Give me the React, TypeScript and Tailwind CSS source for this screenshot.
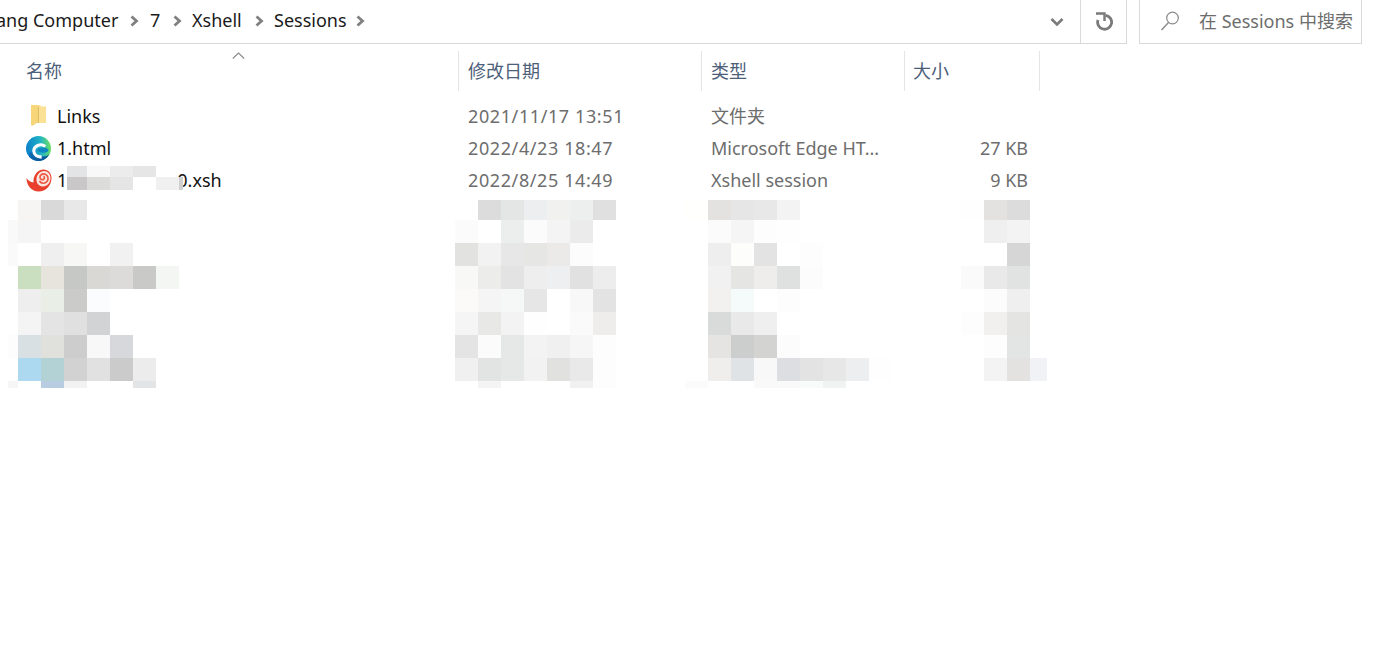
import React from "react";

type Tile = string | null;

const UI_FONT = "font-['Noto_Sans','Noto_Sans_CJK_SC',sans-serif]";

const nameTiles: Tile[] = [
  null, "#f6f5f3", "#d9d9d9", "#e8e8e8", null, null, null, null,
  "#f9f9f9", "#f5f5f5", null, null, null, null, null, null,
  "#fafafa", null, "#efefef", "#f7f7f5", null, "#f1f1f1", null, null,
  null, "#c9dfc0", "#e6e4dc", "#c6c8c6", "#d9d8d5", "#dcdbd9", "#c9c9c8", "#f4f6f4",
  null, "#eeeeee", "#e9efe7", "#cbcbc9", "#fbfcfe", null, null, null,
  null, "#f4f4f4", "#e4e4e4", "#e0e0e0", "#d2d3d5", null, null, null,
  "#fdfdfd", "#d9e0e3", "#e0e0dd", "#cdcdcd", "#f8f8f8", "#d7d8dc", null, null,
  null, "#acd8f0", "#b2d2d6", "#d2d2d2", "#e1e1e1", "#cbcbcb", "#ececec", null,
  "#f6f6f6", null, "#b9cde2", "#f2f2f2", null, null, "#e3e4e6", null,
];

const dateTiles: Tile[] = [
  null, "#dcdcdc", "#e4e6e5", "#eceef0", "#f1f1ef", "#ecefee", "#e0e0e0",
  "#fbfbfb", null, "#ebeeec", "#fbfbfb", "#f4f4f4", "#ebebeb", null,
  "#e2e2e0", "#f2f2f2", "#e7e7e7", "#e6e6e5", "#ebeae8", "#fcfcfc", null,
  "#f8f8f6", "#ececea", "#e3e3e3", "#eeeeee", "#eeeff1", "#e1e1e1", "#ededed",
  "#fbfaf8", "#f5f5f5", "#f6f8f7", "#e6e6e6", null, "#f8f8f8", "#e3e3e3",
  "#f5f5f5", "#e8e8e6", "#f3f3f3", "#fefefe", null, "#fafafa", "#eeedeb",
  "#e4e4e4", "#fbfbfb", "#e6e8e7", "#f3f3f3", "#f0f0f0", "#f6f6f6", "#fdfdfd",
  "#f0f0f0", "#e1e4e3", "#e6e8e7", "#f2f2f2", "#e1e1df", "#e9e9e9", "#fdfdfd",
  null, "#f4f4f4", null, null, null, "#f1f1f1", "#fdfdfd",
];

const typeTiles: Tile[] = [
  "#fffffd", "#e3e2e0", "#e6e6e6", "#e8e8e8", "#f3f3f3", null, null, null, null,
  null, "#fbfbfb", "#f5f5f5", "#fdfdfd", "#fefefe", null, null, null, null,
  null, "#eeeeee", "#fdfdfb", "#e3e3e3", null, "#fdfdfd", null, null, null,
  null, "#f1f1f1", "#e5e5e3", "#eeedeb", "#dfe1e0", "#fcfcfc", null, null, null,
  null, "#f2f1ef", "#f5fafb", null, "#fdfdfd", null, null, null, null,
  null, "#d9dbda", "#e9e9e9", "#efefef", null, null, null, null, null,
  null, "#e5e4e2", "#cccecd", "#d3d3d1", "#fcfcfc", null, null, null, null,
  null, "#efeeec", "#e0e3e6", "#f8f8f8", "#dcdee1", "#e3e3e3", "#e7e7e7", "#edeef0", "#fefefe",
  "#fbfbfb", null, null, "#f9f9f9", "#f9f9f9", "#f9fafa", "#f1f3f3", null, null,
];

const sizeTiles: Tile[] = [
  "#fefefe", "#e3e2e0", "#dcdcdc", null,
  null, "#efefef", "#f3f3f3", null,
  null, null, "#d6d6d6", null,
  "#fafafa", "#e9e9e9", "#e1e3e3", null,
  null, "#fcfcfc", "#efefef", null,
  "#fdfdfd", "#f1f0ee", "#e4e4e2", null,
  null, "#fdfdfd", "#e3e5e5", null,
  null, "#f3f3f3", "#e3e2e0", "#f1f2f5",
  null, null, null, null,
];

const Tiles = ({ tiles }: { tiles: Tile[] }) => (
  <>
    {tiles.map((color, i) => (
      <div key={i} style={color ? { backgroundColor: color } : undefined} />
    ))}
  </>
);

const Chevron = () => (
  <svg width="10" height="12" viewBox="0 0 10 12" className="mt-[2px] shrink-0">
    <path d="M2.500 1.500 7.500 6l-5 4.500" fill="none" stroke="#808080" strokeWidth="2.800" />
  </svg>
);

const FolderIcon = () => (
  <svg width="17" height="22" viewBox="0 0 17 22">
    <path d="M1 0h9l1.500 1.500H16V18H2z" fill="#fbe196" />
    <path d="M7.500 1.500H9V18H7.500z" fill="#e6bf62" />
    <path d="M1 0h6.500v17.500L2 21l-1-1z" fill="#f6d678" />
  </svg>
);

const EdgeIcon = () => (
  <svg width="25" height="25" viewBox="0 0 24 24">
    <defs>
      <linearGradient id="edgeTop" x1="0" y1="0.5" x2="1" y2="0.4">
        <stop offset="0" stopColor="#0b7fcb" />
        <stop offset="0.6" stopColor="#22b4c4" />
        <stop offset="1" stopColor="#6ee05c" />
      </linearGradient>
      <linearGradient id="edgeBottom" x1="0" y1="0" x2="1" y2="1">
        <stop offset="0" stopColor="#0d76c0" />
        <stop offset="1" stopColor="#0b4d8f" />
      </linearGradient>
    </defs>
    <circle cx="12" cy="12" r="12" fill="url(#edgeTop)" />
    <path d="M3 20c3 3.500 7 4.300 10 4 4-.4 7.500-3 9.500-6.500-3 2.300-7 2.700-10 1.200-2-1-3.500-3-3.500-5L3 16z" fill="url(#edgeBottom)" />
    <path d="M18.500 10C14 6.500 7.500 9.500 7.500 14.500c0 3.500 3.500 6 7.500 5.500" fill="none" stroke="#ffffff" strokeWidth="3" />
    <path d="M11 13.500c1.500-2.500 6.500-3.500 10.500-.5.500 2-2 3-4.500 3-2.500 0-5-.5-6-2.500z" fill="#0f86c4" />
  </svg>
);

const ShellIcon = () => (
  <svg width="26" height="24" viewBox="0 0 26 24">
    <path d="M.5 10c1.500 2.500 4 4 7 4.500-.5-6 3-12.500 9.500-13 5-.4 8.500 3.500 8.500 8.500 0 7.500-5.500 13.500-13 13.500C6 23.500.5 18 .5 10z" fill="#e8402c" />
    <path d="M10.500 12.500C10 7 14 3 18 3c3.800 0 6.500 3 6.500 7 0 4.500-3.300 8.500-7.500 8.500-3.300 0-6.200-2.500-6.500-6z" fill="#fbe7e0" />
    <path d="M13.500 13c1.500 2.800 5.500 3 7.500.5 1.800-2.300 1.300-6-1.800-7.300-2.800-1.100-5.500.8-5.200 3.300.2 1.900 2.400 2.900 3.800 1.600 1-.9.800-2.400-.4-2.800" fill="none" stroke="#ea5a44" strokeWidth="1.700" />
  </svg>
);

const Crumb = ({ label, gap }: { label: string; gap: string }) => (
  <span className={`text-[#1a1a1a] ${gap}`}>{label}</span>
);

export default function App() {
  return (
    <div className={`relative h-[658px] w-[1374px] overflow-hidden bg-white text-[18px] ${UI_FONT}`}>
      {/* address bar + search */}
      <div className="flex h-[44px]">
        <div className="flex w-[1127px] items-center overflow-hidden border-r border-b border-[#d9d9d9]">
          <div className="flex flex-1 items-center pb-[3px] leading-none">
            <Crumb label="ang Computer" gap="-ml-[4px] w-[133px] whitespace-nowrap" />
            <Chevron />
            <Crumb label="7" gap="ml-[11px] w-[22px]" />
            <Chevron />
            <Crumb label="Xshell" gap="ml-[10px] w-[62px]" />
            <Chevron />
            <Crumb label="Sessions" gap="ml-[10px] w-[81px]" />
            <Chevron />
          </div>
          <div className="flex h-full w-[46px] items-center justify-center">
            <svg width="14" height="10" viewBox="0 0 14 10">
              <path d="M1.500 2 7 7.500 12.500 2" fill="none" stroke="#7a7a7a" strokeWidth="2.600" />
            </svg>
          </div>
          <div className="flex h-full w-[46px] items-center justify-center border-l border-[#d9d9d9]">
            <svg width="18" height="20" viewBox="0 0 18 20">
              <path d="M10.500 3.300A7 7 0 1 1 3 8" fill="none" stroke="#7a7a7a" strokeWidth="2.800" />
              <path d="M1 1.500h8.500V9" fill="none" stroke="#7a7a7a" strokeWidth="2.400" />
            </svg>
          </div>
        </div>
        <div className="ml-[12px] flex w-[223px] items-center border-r border-b border-l border-[#d9d9d9] pb-[1px]">
          <svg width="22" height="22" viewBox="0 0 22 22" className="ml-[19px]">
            <circle cx="13.500" cy="8" r="5.800" fill="none" stroke="#8a8a8a" strokeWidth="1.200" />
            <path d="M9.500 12.500 2.500 20" stroke="#8a8a8a" strokeWidth="1.400" />
          </svg>
          <span className="ml-[18px] whitespace-nowrap text-[#6d6d6d]">在 Sessions 中搜索</span>
        </div>
      </div>

      {/* column headers */}
      <div className="relative mt-[7px] flex h-[40px] text-[#4c607a]">
        <div className="flex w-[459px] items-center border-r border-[#e5e5e5] pl-[26px]">名称</div>
        <div className="flex w-[243px] items-center border-r border-[#e5e5e5] pl-[9px]">修改日期</div>
        <div className="flex w-[203px] items-center border-r border-[#e5e5e5] pl-[9px]">类型</div>
        <div className="flex w-[135px] items-center border-r border-[#e5e5e5] pl-[8px]">大小</div>
        <svg width="13" height="7" viewBox="0 0 13 7" className="absolute top-[1px] left-[232px]">
          <path d="M.8 6.500 6.500 1l5.700 5.500" fill="none" stroke="#8a8a8a" strokeWidth="1.100" />
        </svg>
      </div>

      {/* file rows */}
      <div className="mt-[9px] flex flex-col text-[#6d6d6d]">
        <div className="flex h-[32px] items-center">
          <div className="flex w-[459px] items-center">
            <div className="flex w-[57px] justify-center pl-[20px]">
              <FolderIcon />
            </div>
            <span className="text-[#111]">Links</span>
          </div>
          <div className="w-[243px] pl-[9px] tracking-[0.6px]">2021/11/17 13:51</div>
          <div className="w-[203px] pl-[9px]">文件夹</div>
        </div>
        <div className="flex h-[32px] items-center">
          <div className="flex w-[459px] items-center">
            <div className="flex w-[57px] justify-center pl-[20px]">
              <EdgeIcon />
            </div>
            <span className="text-[#111]">1.html</span>
          </div>
          <div className="w-[243px] pl-[9px] tracking-[0.6px]">2022/4/23 18:47</div>
          <div className="w-[203px] pl-[9px] whitespace-nowrap">Microsoft Edge HT...</div>
          <div className="w-[123px] text-right">27 KB</div>
        </div>
        <div className="flex h-[32px] items-center">
          <div className="relative flex w-[459px] items-center">
            <div className="flex w-[57px] justify-center pl-[20px]">
              <ShellIcon />
            </div>
            <span className="text-[#111]">1</span>
            <span className="ml-[110px] text-[#111]">0.xsh</span>
            {/* blurred part of the file name */}
            <div className="absolute top-[-1px] left-[67px] grid h-[24px] w-[116px] grid-cols-[20px_23px_23px_23px_23px_4px] grid-rows-[11px_13px]">
              <Tiles
                tiles={[
                  "#e3e4e6", "#f8f8f8", "#ececec", "#e6e6e6", null, null,
                  "#c9c7c8", "#dcdcda", "#e5e5e5", null, "#f0f0f0", "#d0d0d0",
                ]}
              />
            </div>
          </div>
          <div className="w-[243px] pl-[9px] tracking-[0.6px]">2022/8/25 14:49</div>
          <div className="w-[203px] pl-[9px]">Xshell session</div>
          <div className="w-[123px] text-right">9 KB</div>
        </div>
      </div>

      {/* pixelated rows below */}
      <div className="mt-[4px] flex items-start">
        <div className="ml-[8px] grid h-[188px] w-[171px] grid-cols-[10px_repeat(7,23px)] grid-rows-[20px_repeat(7,23px)_7px]">
          <Tiles tiles={nameTiles} />
        </div>
        <div className="ml-[276px] grid h-[188px] w-[161px] grid-cols-[repeat(7,23px)] grid-rows-[20px_repeat(7,23px)_7px]">
          <Tiles tiles={dateTiles} />
        </div>
        <div className="ml-[69px] grid h-[188px] w-[207px] grid-cols-[repeat(9,23px)] grid-rows-[20px_repeat(7,23px)_7px]">
          <Tiles tiles={typeTiles} />
        </div>
        <div className="ml-[69px] grid h-[188px] w-[86px] grid-cols-[23px_23px_23px_17px] grid-rows-[20px_repeat(7,23px)_7px]">
          <Tiles tiles={sizeTiles} />
        </div>
      </div>
    </div>
  );
}
